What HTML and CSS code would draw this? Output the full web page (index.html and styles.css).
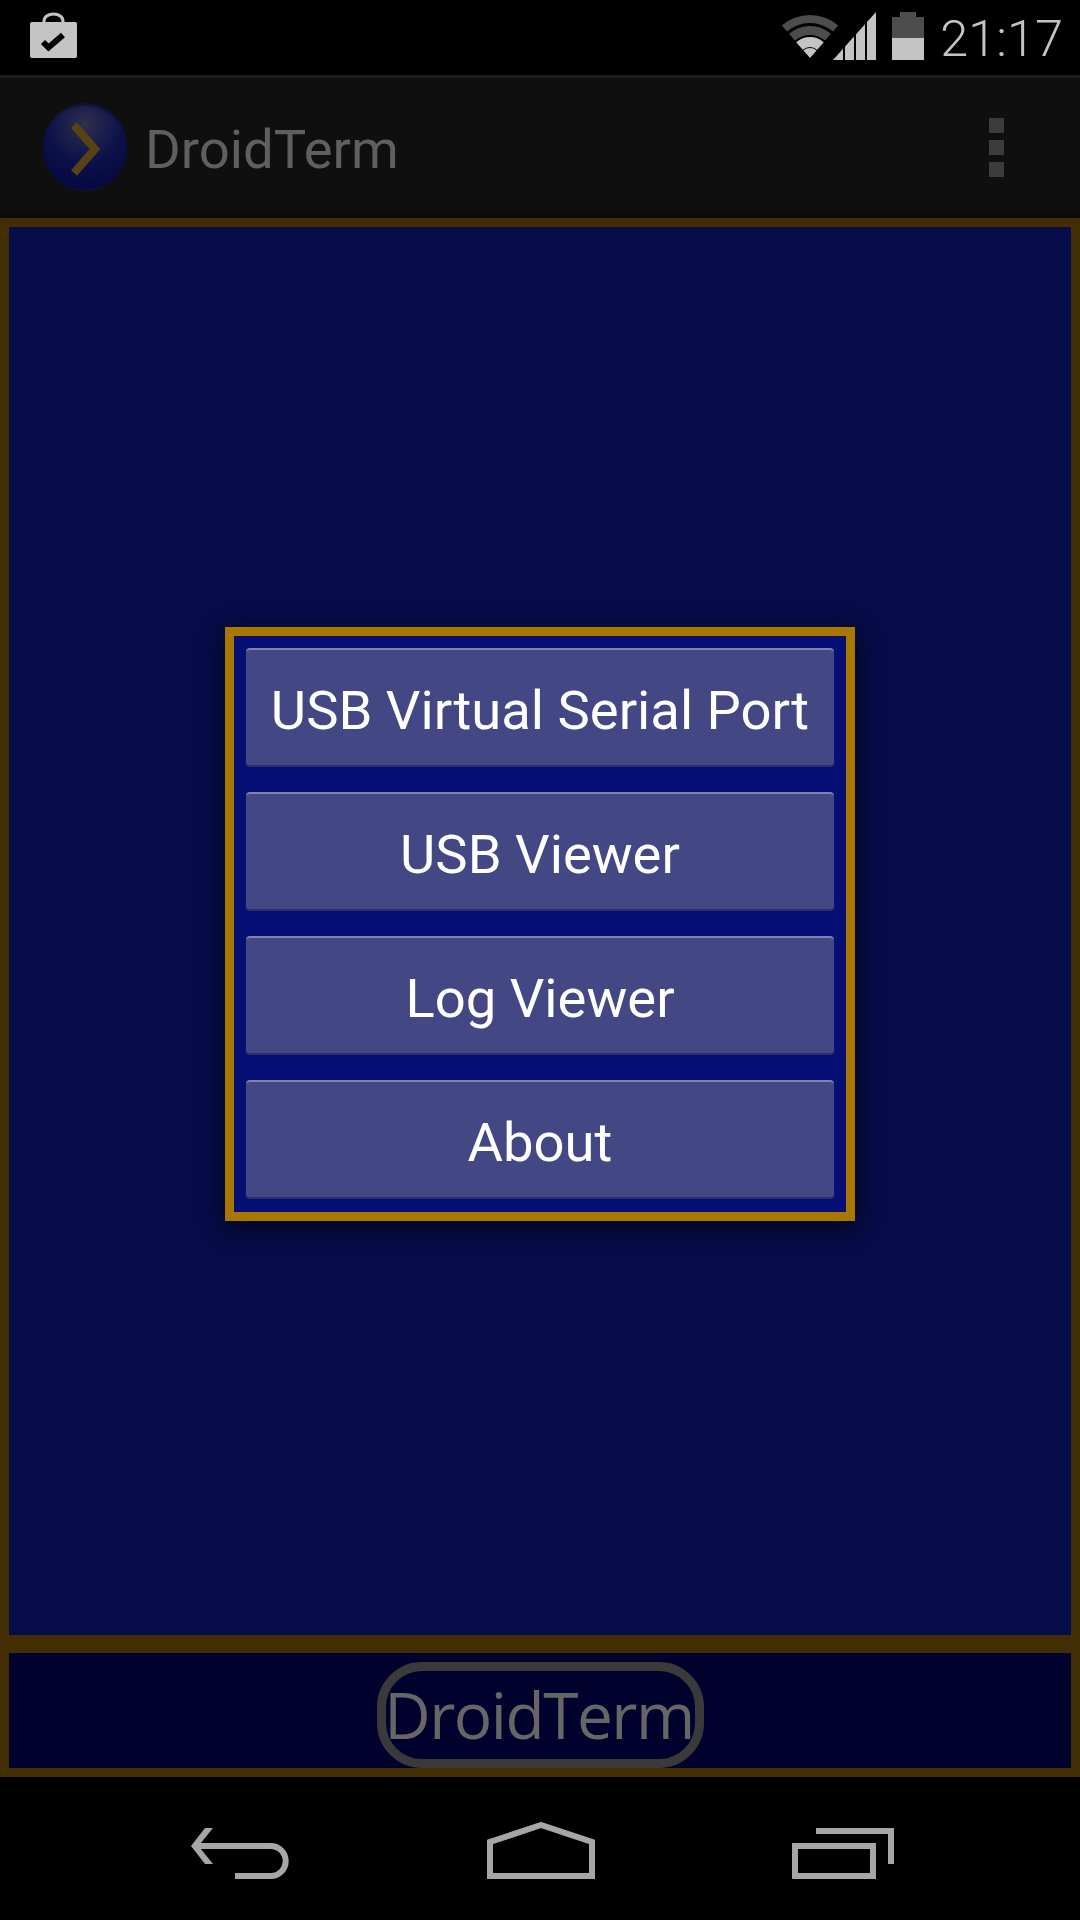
FILE: index.html
```html
<!DOCTYPE html>
<html lang="en">
<head>
    <meta charset="UTF-8">
    <title>DroidTerm</title>
    <link rel="stylesheet" href="styles.css">
</head>
<body>
    <div class="status-bar">
        <svg class="bag-icon" width="47" height="46" viewBox="0 0 47 46">
            <path class="bag-handle" d="M14 12V9A9.500 7 0 0 1 33 9V12"/>
            <rect class="bag-body" x="0" y="10" width="47" height="36" rx="2"/>
            <path class="bag-check" d="M13 30L18.500 35.500L33 23"/>
        </svg>
        <div class="status-right">
            <svg class="wifi-icon" width="60" height="44" viewBox="0 0 60 44">
                <path class="wifi-dim wifi-outer" d="M4.400 13.600A39 39 0 0 1 55.600 13.600"/>
                <path class="wifi-dim wifi-mid" d="M12 22.200A27.500 27.500 0 0 1 48 22.200"/>
                <path class="wifi-lit" d="M19.500 30.900A16 16 0 0 1 40.500 30.900"/>
                <path class="wifi-tip" d="M30 43L23.400 35.500A10 10 0 0 1 36.600 35.500Z"/>
            </svg>
            <svg class="signal-icon" width="43" height="48" viewBox="0 0 43 48">
                <path d="M0 48L10 36.800V48Z"/>
                <path d="M12 34.600L21 24.500V48H12Z"/>
                <path d="M23 22.300L32 12.300V48H23Z"/>
                <path d="M34 10L43 0V48H34Z"/>
            </svg>
            <div class="battery">
                <div class="battery-nub"></div>
                <div class="battery-body">
                    <div class="battery-level"></div>
                </div>
            </div>
            <div class="clock">21:17</div>
        </div>
    </div>

    <div class="action-bar">
        <div class="app-title">
            <svg class="app-logo" width="84" height="88" viewBox="0 0 84 88">
                <defs>
                    <radialGradient id="logoFill" cx="50%" cy="22%" r="80%">
                        <stop offset="0%" stop-color="#2f2f4e"/>
                        <stop offset="55%" stop-color="#0d1149"/>
                        <stop offset="100%" stop-color="#030842"/>
                    </radialGradient>
                </defs>
                <ellipse cx="42" cy="44" rx="42" ry="44" fill="#101435"/>
                <circle cx="42" cy="45" r="42" fill="url(#logoFill)"/>
                <path class="logo-chevron" d="M31 22L52 46L31 70"/>
            </svg>
            <span class="app-name">DroidTerm</span>
        </div>
        <div class="overflow-menu">
            <div class="overflow-dot"></div>
            <div class="overflow-dot"></div>
            <div class="overflow-dot"></div>
        </div>
    </div>

    <div class="main-panel">
        <div class="menu-box">
            <div class="menu-btn">USB Virtual Serial Port</div>
            <div class="menu-btn">USB Viewer</div>
            <div class="menu-btn">Log Viewer</div>
            <div class="menu-btn">About</div>
        </div>
    </div>

    <div class="footer-panel">
        <div class="footer-pill">DroidTerm</div>
    </div>

    <div class="nav-bar">
        <svg class="nav-icon" width="98" height="52" viewBox="0 0 98 52">
            <path class="nav-fill" d="M14 0H22L7.500 18L22 36H14L0 18Z"/>
            <path class="nav-line" d="M5 18H79.700A15 15 0 0 1 79.700 48H44"/>
        </svg>
        <svg class="nav-icon nav-home" width="108" height="57" viewBox="0 0 108 57">
            <path class="nav-line" d="M3 54V20L54 3L105 20V54Z"/>
        </svg>
        <svg class="nav-icon" width="102" height="52" viewBox="0 0 102 52">
            <path class="nav-line" d="M3 18H81V48H3Z"/>
            <path class="nav-line" d="M24 3H99V36"/>
        </svg>
    </div>
</body>
</html>
```

FILE: styles.css
```css
* {
    margin: 0;
    padding: 0;
    box-sizing: border-box;
}

body {
    width: 1080px;
    height: 1920px;
    display: flex;
    flex-direction: column;
    background: #000;
    font-family: Roboto, "Liberation Sans", sans-serif;
    overflow: hidden;
}

svg {
    display: block;
    flex-shrink: 0;
}

/* status bar */
.status-bar {
    height: 75px;
    display: flex;
    justify-content: space-between;
    padding: 12px 17px 0 30px;
    background: #000;
}

.bag-handle {
    fill: none;
    stroke: #c4c4c4;
    stroke-width: 3;
}

.bag-body {
    fill: #c4c4c4;
}

.bag-check {
    fill: none;
    stroke: #000;
    stroke-width: 6;
}

.status-right {
    display: flex;
    align-items: flex-start;
}

.wifi-icon {
    margin-top: 3px;
}

.wifi-dim,
.wifi-lit {
    fill: none;
}

.wifi-dim {
    stroke: #4d4d4d;
}

.wifi-outer {
    stroke-width: 8;
}

.wifi-mid {
    stroke-width: 9;
}

.wifi-lit {
    stroke: #c4c4c4;
    stroke-width: 10;
}

.wifi-tip {
    fill: #c4c4c4;
}

.signal-icon {
    margin-left: -7px;
    fill: #c4c4c4;
}

.battery {
    width: 32px;
    margin-left: 16px;
}

.battery-nub {
    width: 16px;
    height: 5px;
    margin: 0 auto;
    background: #4d4d4d;
}

.battery-body {
    height: 43px;
    display: flex;
    align-items: flex-end;
    background: #4d4d4d;
}

.battery-level {
    width: 100%;
    height: 22px;
    background: #c4c4c4;
}

.clock {
    width: 139px;
    margin-top: 3px;
    font-size: 50.500px;
    font-weight: 350;
    line-height: 48px;
    color: #c4c4c4;
    text-align: right;
}

/* action bar */
.action-bar {
    height: 144px;
    display: flex;
    justify-content: space-between;
    align-items: center;
    padding: 0 76px 0 43px;
    border-top: 3px solid #1c1c1c;
    background: linear-gradient(#0f0f0f 135px, #0b0b0b 135px);
}

.app-title {
    display: flex;
    align-items: center;
    gap: 18px;
}

.app-logo {
    margin-bottom: 2px;
}

.logo-chevron {
    fill: none;
    stroke: #574213;
    stroke-width: 8;
}

.app-name {
    padding-top: 2px;
    font-size: 54.500px;
    color: #5f5f5f;
}

.overflow-menu {
    display: flex;
    flex-direction: column;
    gap: 7px;
}

.overflow-dot {
    width: 15px;
    height: 15px;
    background: #3c3c3c;
}

/* main area */
.main-panel {
    height: 1424px;
    display: flex;
    justify-content: center;
    padding-top: 400px;
    border: 9px solid #432d02;
    border-bottom-width: 0;
    background: #060d4a;
}

.menu-box {
    width: 630px;
    height: 594px;
    display: flex;
    flex-direction: column;
    gap: 25px;
    padding: 12px 12px 13px;
    border: 9px solid #a87700;
    background: #060f73;
    box-shadow: 0 6px 22px 3px rgba(0, 0, 0, 0.6);
}

.menu-btn {
    height: 119px;
    display: flex;
    justify-content: center;
    align-items: center;
    padding-top: 6px;
    border-radius: 4px;
    border-top: 2px solid #7d81ad;
    border-bottom: 2px solid #2a2d66;
    background: #434884;
    font-size: 54.400px;
    color: #fff;
}

/* footer */
.footer-panel {
    height: 142px;
    display: flex;
    justify-content: center;
    align-items: flex-start;
    padding-top: 9px;
    border: 9px solid #432d02;
    border-top-width: 18px;
    background: #00022d;
}

.footer-pill {
    width: 327px;
    height: 106px;
    display: flex;
    justify-content: center;
    align-items: center;
    padding-right: 2px;
    border: 9px solid #3a3a3a;
    border-radius: 45px;
    font-family: "Open Sans", sans-serif;
    font-size: 64px;
    font-weight: 500;
    letter-spacing: -1.500px;
    color: #666;
}

/* navigation bar */
.nav-bar {
    height: 144px;
    display: flex;
    justify-content: space-between;
    align-items: flex-start;
    padding: 51px 186px 0 191px;
    background: #000;
}

.nav-home {
    margin-top: -6px;
}

.nav-line {
    fill: none;
    stroke: #a6a6a6;
    stroke-width: 6;
}

.nav-fill {
    fill: #a6a6a6;
}
```
